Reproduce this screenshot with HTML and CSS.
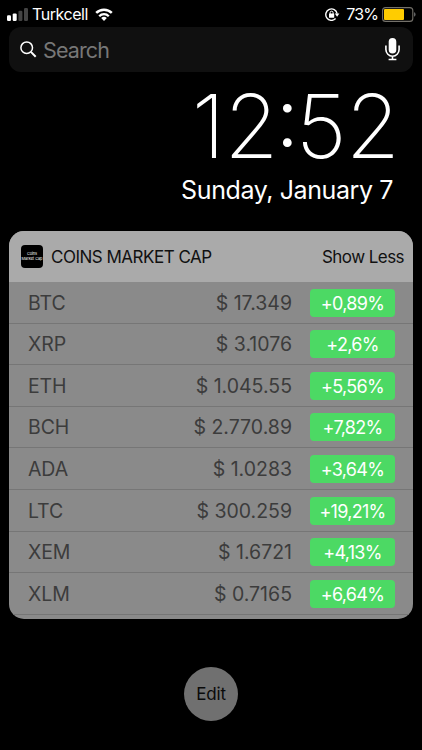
FILE: index.html
```html
<!DOCTYPE html>
<html lang="en">
<head>
  <meta charset="UTF-8">
  <title>Coins Market Cap Widget</title>
  <meta name="viewport" content="width=device-width, initial-scale=1.0">
  <link rel="stylesheet" href="styles.css">
</head>
<body>
  <div class="screen">
    <!-- Status Bar -->
    <div class="status-bar">
      <div class="status-left">
        <svg class="signal" width="21" height="13" viewBox="0 0 21 13">
          <rect x="0" y="7.3" width="4" height="5.7" rx="1.2" fill="#fff"/>
          <rect x="5.7" y="5.4" width="4" height="7.6" rx="1.2" fill="#fff"/>
          <rect x="11.4" y="2.8" width="4" height="10.2" rx="1.2" fill="#444"/>
          <rect x="17" y="0" width="4" height="13" rx="1.2" fill="#444"/>
        </svg>
        <span class="carrier">Turkcell</span>
        <svg class="wifi" width="18" height="13" viewBox="0 0 18 13">
          <path d="M1.2 4.9a11 11 0 0 1 15.6 0" fill="none" stroke="#fff" stroke-width="2.5"/>
          <path d="M4.2 8.2a6.8 6.8 0 0 1 9.6 0" fill="none" stroke="#fff" stroke-width="2.3"/>
          <path d="M9 13l-2.8-2.9a4 4 0 0 1 5.6 0z" fill="#fff"/>
        </svg>
      </div>
      <div class="status-right">
        <svg class="lock" width="15" height="13" viewBox="0 0 15 13">
          <path d="M10.6 10.6A5.7 5.7 0 1 1 12.1 5.6" fill="none" stroke="#fff" stroke-width="1.4"/>
          <path d="M9.8 5.6h4.6l-2.3 3.1z" fill="#fff"/>
          <rect x="4" y="5.6" width="5.2" height="4.2" rx=".5" fill="#fff"/>
          <path d="M5.1 6V4.7a1.5 1.5 0 0 1 3 0V6" fill="none" stroke="#fff" stroke-width="1"/>
        </svg>
        <span class="percent">73%</span>
        <svg class="battery" width="34" height="15" viewBox="0 0 34 15">
          <rect x=".6" y=".6" width="30.2" height="13.8" rx="3" fill="none" stroke="#74716a" stroke-width="1.1"/>
          <rect x="2" y="2" width="20" height="11" rx="1" fill="#fc0"/>
          <path d="M32.2 5.3c1.7.6 1.7 3.8 0 4.4z" fill="#777"/>
        </svg>
      </div>
    </div>

    <!-- Search -->
    <div class="search">
      <svg class="search-icon" width="17" height="17" viewBox="0 0 17 17">
        <circle cx="6.7" cy="6.7" r="5.8" fill="none" stroke="#fff" stroke-width="1.5"/>
        <path d="M10.9 10.9l4.8 4.8" stroke="#fff" stroke-width="2"/>
      </svg>
      <span class="search-text">Search</span>
      <svg class="mic" width="15" height="23" viewBox="0 0 15 23">
        <rect x="3.7" y="0" width="7.6" height="15.6" rx="3.8" fill="#fff"/>
        <path d="M.9 7.6v4a6.6 6.6 0 0 0 13.2 0v-4M7.5 18v3.6M3.6 21.5h7.8" fill="none" stroke="#fff" stroke-width="1.6"/>
      </svg>
    </div>

    <!-- Clock -->
    <div class="clock">
      <div class="time">12<span class="colon">:</span>52</div>
      <div class="date">Sunday, January 7</div>
    </div>

    <!-- Coins -->
    <div class="widget">
      <div class="widget-header">
        <div class="app-icon"><span>Coins</span><span>Market Cap</span></div>
        <div class="widget-title">COINS MARKET CAP</div>
        <div class="show-less">Show Less</div>
      </div>
      <div class="coin"><span class="name">BTC</span><span class="price">$ 17.349</span><span class="change">+0,89%</span></div>
      <div class="coin"><span class="name">XRP</span><span class="price">$ 3.1076</span><span class="change">+2,6%</span></div>
      <div class="coin"><span class="name">ETH</span><span class="price">$ 1.045.55</span><span class="change">+5,56%</span></div>
      <div class="coin"><span class="name">BCH</span><span class="price">$ 2.770.89</span><span class="change">+7,82%</span></div>
      <div class="coin"><span class="name">ADA</span><span class="price">$ 1.0283</span><span class="change">+3,64%</span></div>
      <div class="coin"><span class="name">LTC</span><span class="price">$ 300.259</span><span class="change">+19,21%</span></div>
      <div class="coin"><span class="name">XEM</span><span class="price">$ 1.6721</span><span class="change">+4,13%</span></div>
      <div class="coin"><span class="name">XLM</span><span class="price">$ 0.7165</span><span class="change">+6,64%</span></div>
    </div>

    <div class="edit">Edit</div>
  </div>
</body>
</html>
```

FILE: styles.css
```css
* {
  box-sizing: border-box;
}

html, body {
  margin: 0;
  padding: 0;
  height: 100%;
  background: #000;
  font-family: Inter, "Liberation Sans", sans-serif;
}

.screen {
  width: 422px;
  height: 750px;
  padding: 0 9px;
  overflow: hidden;
  color: #fff;
}

.status-bar {
  display: flex;
  justify-content: space-between;
  height: 27px;
}

.status-left,
.status-right {
  display: flex;
  align-items: center;
  height: 28px;
}

.signal {
  margin-left: -2px;
}

.carrier {
  margin-left: 4px;
  font-size: 16px;
  letter-spacing: -0.45px;
}

.wifi {
  margin-left: 7px;
}

.percent {
  margin-left: 6px;
  font-size: 16px;
  letter-spacing: -0.9px;
}

.battery {
  margin: 0 -3px 0 4px;
}

.search {
  display: flex;
  align-items: center;
  height: 45px;
  padding: 0 13px 0 11px;
  border-radius: 12px;
  background: #101010;
}

.search-text {
  flex: 1;
  margin-left: 6px;
  font-size: 21.5px;
  letter-spacing: -0.9px;
  color: #777;
}

.clock {
  text-align: right;
}

.time {
  height: 86px;
  padding: 11px 14px 0 0;
  font-size: 88px;
  line-height: 86px;
  font-weight: 250;
  letter-spacing: -1px;
}

.colon {
  position: relative;
  top: -11px;
  margin: 0 -2px;
  font-size: 82px;
  font-weight: 300;
}

.date {
  height: 30px;
  margin-top: 17px;
  padding-right: 20px;
  font-size: 25px;
  line-height: 30px;
  letter-spacing: -0.4px;
}

.widget {
  height: 388px;
  margin-top: 26px;
  overflow: hidden;
  border-radius: 15px;
  background: #8a8a8a;
}

.widget-header {
  display: flex;
  align-items: center;
  height: 51px;
  padding: 0 9px 0 12px;
  background: #aaa;
  color: #111;
}

.app-icon {
  display: flex;
  flex-direction: column;
  align-items: center;
  justify-content: center;
  width: 22px;
  height: 23px;
  border-radius: 4px;
  background: #000;
  color: #fff;
  font-size: 3.8px;
  line-height: 4.5px;
}

.widget-title {
  flex: 1;
  margin-left: 8px;
  font-size: 17px;
  letter-spacing: -0.5px;
}

.show-less {
  font-size: 17px;
  letter-spacing: -0.55px;
}

.coin {
  display: flex;
  align-items: center;
  height: 41.6px;
  padding: 0.5px 18px 0 19px;
  border-bottom: 1px solid #767676;
  font-size: 19.5px;
  color: #3c3c3c;
}

.name {
  letter-spacing: -0.1px;
}

.price {
  flex: 1;
  text-align: right;
}

.change {
  width: 85px;
  height: 28px;
  margin-left: 18px;
  border-radius: 4px;
  background: #4cd964;
  color: #fff;
  font-size: 18px;
  line-height: 29px;
  letter-spacing: -0.7px;
  text-align: center;
}

.edit {
  width: 54px;
  height: 54px;
  margin: 48px auto 0;
  border-radius: 50%;
  background: #707070;
  color: #0a0a0a;
  font-size: 17px;
  line-height: 54px;
  letter-spacing: -0.2px;
  text-align: center;
}
```
